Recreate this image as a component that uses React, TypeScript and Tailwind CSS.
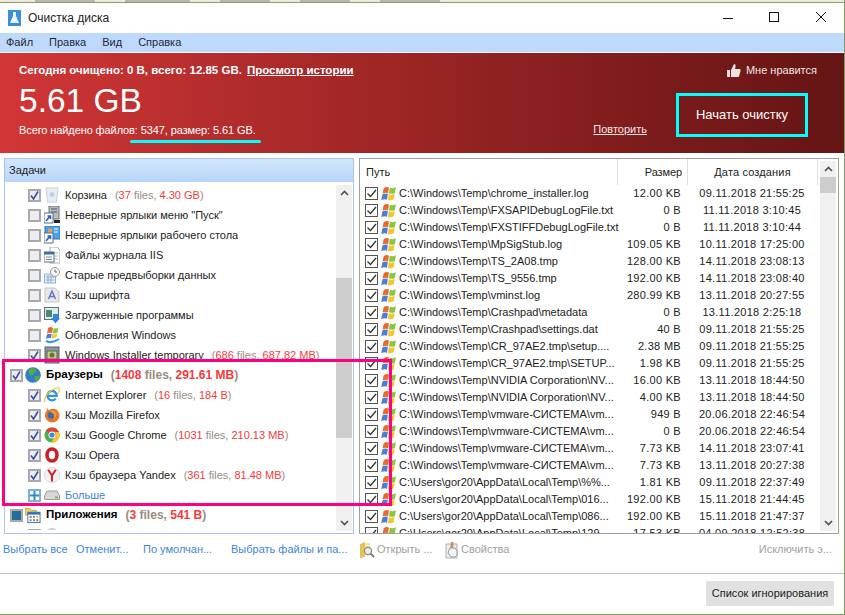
const font = "font-['Liberation_Sans',Arial,sans-serif]";

const WinFlag = () => (
  <svg width="16" height="16" viewBox="1 1 15 14" className="shrink-0">
    <path d="M3.5 2.5 Q6 0.8 8.5 2 L7.6 7.2 Q5 6.2 2.4 7.6Z" fill="#ea6a2c" />
    <path d="M9.3 2.2 Q12 3.2 15 1.6 L14 7 Q11 8.4 8.4 7.4Z" fill="#8cc63f" />
    <path d="M2.3 8.4 Q5 7 7.4 8 L6.6 13.4 Q4 12.4 1.2 13.8Z" fill="#4a7fd8" />
    <path d="M8.3 8.2 Q11 9.2 13.8 7.8 L13 13 Q10 14.4 7.5 13.6Z" fill="#f5c52c" />
  </svg>
);

const Folder = () => (
  <svg width="16" height="18" viewBox="0 0 16 18" className="shrink-0">
    <path d="M1 3 L6 1 L6 16 L1 17Z" fill="#e6c25a" />
    <path d="M6 2 H11 V14 H6Z" fill="#f6e7a6" />
    <circle cx="9" cy="10" r="3.6" fill="#e8eef2" stroke="#8a8a7a" strokeWidth="1.2" />
    <path d="M11.5 12.5 L15 16" stroke="#7a7a6a" strokeWidth="1.8" />
  </svg>
);

const Props = () => (
  <svg width="16" height="18" viewBox="0 0 16 18" className="shrink-0">
    <path d="M2 3 H13 V17 H2Z" fill="#eeeeee" stroke="#b0b0b0" />
    <path d="M7 1 L9.5 1 L9 9 H6Z" fill="#d98a5a" />
    <path d="M5 9 L6 7 H11 L13 10 V14 L11 16 H7 L4 12Z" fill="#f4f4f4" stroke="#9a9a9a" />
  </svg>
);

const TreeIcon = ({ name }: { name: string }) => {
  switch (name) {
    case 'bin':
      return (
        <svg width="16" height="16" viewBox="0 0 16 16">
          <path d="M2 1 H14 L12.5 15 H3.5Z" fill="#e9eef3" stroke="#c9d2da" />
          <circle cx="8" cy="7.5" r="2.5" fill="#b9d4ea" />
        </svg>
      );
    case 'shortcut1':
      return (
        <svg width="16" height="18" viewBox="0 0 16 18">
          <path d="M5 0 H15 V13 H5Z" fill="#b8bcc2" stroke="#6a6f78" />
          <path d="M7 3 H13 M7 6 H13" stroke="#4a4f58" />
          <path d="M10 14 H16 V17 H10Z" fill="#222" />
          <path d="M0 7 H9 V17 H0Z" fill="#fff" stroke="#5a6a80" />
          <path d="M2 15 L6 10 M3.5 10 H6.5 V13" stroke="#1f62c8" strokeWidth="1.6" fill="none" />
        </svg>
      );
    case 'shortcut2':
      return (
        <svg width="16" height="18" viewBox="0 0 16 18">
          <path d="M1 0 H16 V13 H1Z" fill="#4aa3e6" stroke="#2a78bc" />
          <rect x="4" y="3" width="4" height="4" fill="#f0a040" />
          <path d="M10 3 H14 M10 6 H14" stroke="#fff" />
          <path d="M0 7 H9 V17 H0Z" fill="#fff" stroke="#5a6a80" />
          <path d="M2 15 L6 10 M3.5 10 H6.5 V13" stroke="#1f62c8" strokeWidth="1.6" fill="none" />
        </svg>
      );
    case 'log':
      return (
        <svg width="16" height="17" viewBox="0 0 16 17">
          <path d="M6 0 H13 L16 3 V16 H6Z" fill="#fff" stroke="#a8a8a8" />
          <path d="M9 6 H14 M9 9 H14 M9 12 H14" stroke="#b5b5b5" />
          <rect x="0" y="5" width="10" height="10" fill="#fff" stroke="#5f6f8a" />
          <rect x="0" y="5" width="10" height="2.5" fill="#3d6cb0" />
          <path d="M2 10 H8 M2 12.5 H8" stroke="#7b8aa0" />
        </svg>
      );
    case 'prefetch':
      return (
        <svg width="16" height="17" viewBox="0 0 16 17">
          <rect x="0.5" y="7" width="11" height="9" fill="#e2edf7" stroke="#8fb4d4" />
          <path d="M2 10 H10 M2 13 H10 M4 8 V16 M7 8 V16" stroke="#8fb4d4" />
          <circle cx="11" cy="5" r="4.5" fill="#f4f4f4" stroke="#9a9a9a" />
          <path d="M11 2.5 V5 H13" stroke="#666" fill="none" />
        </svg>
      );
    case 'font':
      return (
        <svg width="16" height="16" viewBox="0 0 16 16">
          <path d="M1 1 H11 L15 5 V15 H1Z" fill="#e8e8e8" stroke="#c4c4c4" />
          <path d="M4.5 12 L8 4 L11.5 12 M6 9.5 H10" stroke="#5a7cc0" strokeWidth="1.5" fill="none" />
        </svg>
      );
    case 'download':
      return (
        <svg width="16" height="17" viewBox="0 0 16 17">
          <rect x="0.5" y="0.5" width="14" height="12" fill="#dfe8ee" stroke="#5e7080" />
          <rect x="2" y="3" width="6" height="7" fill="#4d8a6a" />
          <path d="M9 7 H14 V11 H16 L11.5 16.5 L7 11 H9Z" fill="#2f86d8" />
        </svg>
      );
    case 'update':
      return (
        <svg width="16" height="18" viewBox="0 0 16 18">
          <path d="M4 2 Q7 0 9 2 L8 7 Q5 6 3 8Z" fill="#ea6a2c" />
          <path d="M9.7 2 Q12 3 14.5 1.5 L13.5 6.5 Q11 8 8.8 7Z" fill="#8cc63f" />
          <path d="M2.8 8.7 Q5 7 7.8 8 L7 12 Q4 11.5 2 13Z" fill="#4a7fd8" />
          <path d="M8.6 8 Q11 8.8 13.3 7.4 L12.6 11 Q10 12.5 7.8 12Z" fill="#f5c52c" />
          <path d="M2 15 Q8 18 15 13" stroke="#3d9ad8" strokeWidth="2" fill="none" />
        </svg>
      );
    case 'installer':
      return (
        <svg width="16" height="18" viewBox="0 0 16 18">
          <rect x="1" y="1" width="14" height="16" fill="#8f96a0" stroke="#5a5f68" />
          <rect x="3" y="5" width="10" height="8" fill="#d7c684" stroke="#4c6f4c" />
          <circle cx="8" cy="9" r="2.5" fill="#4f7c4f" />
        </svg>
      );
    case 'globe':
      return (
        <svg width="16" height="16" viewBox="0 0 16 16">
          <circle cx="8" cy="8" r="7.8" fill="#2f7fc4" />
          <path d="M4 2.5 Q8 0 11 2 Q12 5 9 6 Q8 9 5.5 8.5 Q3 6 4 2.5Z" fill="#58a845" />
          <path d="M9.5 9.5 Q13 8 15 9.5 Q14 13 11 14.5 Q9 12 9.5 9.5Z" fill="#58a845" />
        </svg>
      );
    case 'ie':
      return (
        <svg width="16" height="16" viewBox="0 0 16 16">
          <path d="M4.2 8.8 H12.8 A4.7 4.7 0 1 0 11.8 11.6" stroke="#2f97de" strokeWidth="2.3" fill="none" />
          <path d="M1 15 Q-0.5 10 6 4.5 Q13 -0.5 15 1 Q16 3 14 6.5" stroke="#f0c030" strokeWidth="1.1" fill="none" />
        </svg>
      );
    case 'firefox':
      return (
        <svg width="16" height="16" viewBox="0 0 16 16">
          <path d="M3 3 Q2 1.5 3 1 Q4 3 5 3 Q9 0.5 13 3 Q16.5 7 15 11 Q12.5 15.5 8 15.5 Q2.5 15 1 9.5 Q0.7 6 3 3Z" fill="#e8762a" />
          <circle cx="7.5" cy="8" r="3.8" fill="#3f6aa8" />
          <path d="M5 4 Q10 2.5 12.5 6 Q13 10 9.5 12 Q11 9 9.5 7 Q7.5 5.500 5 4Z" fill="#f29a2e" />
        </svg>
      );
    case 'chrome':
      return (
        <svg width="16" height="16" viewBox="0 0 16 16">
          <circle cx="8" cy="8" r="7.6" fill="#4caf50" />
          <path d="M8 0.4 A7.6 7.6 0 0 1 14.9 4.9 H8 A3.2 3.2 0 0 0 4.9 7 L2 3 A7.6 7.6 0 0 1 8 0.4Z" fill="#e04534" />
          <path d="M14.9 4.9 A7.6 7.6 0 0 1 7.2 15.6 L10.6 10 A3.2 3.2 0 0 0 11 5Z" fill="#f8c42d" />
          <circle cx="8" cy="8" r="3.5" fill="#fff" />
          <circle cx="8" cy="8" r="2.6" fill="#3d86e0" />
        </svg>
      );
    case 'opera':
      return (
        <svg width="16" height="16" viewBox="0 0 16 16">
          <ellipse cx="8" cy="8" rx="5" ry="6" fill="none" stroke="#cc1f26" strokeWidth="3.6" />
        </svg>
      );
    case 'yandex':
      return (
        <svg width="16" height="16" viewBox="0 0 16 16">
          <circle cx="8" cy="8" r="7.6" fill="#f2f2f2" stroke="#d8d8d8" />
          <path d="M4.2 2.8 L8 8.6 L11.8 2.8 M8 8.6 V14.4" stroke="#d8222a" strokeWidth="2" fill="none" />
        </svg>
      );
    case 'drive':
      return (
        <svg width="16" height="16" viewBox="0 0 16 16">
          <path d="M3 4 H13 L15.5 9 V12.5 H0.5 V9Z" fill="#d8d8d8" stroke="#9c9c9c" />
          <rect x="11" y="9.6" width="3" height="1.6" fill="#68b04a" />
        </svg>
      );
    case 'apps':
      return (
        <svg width="17" height="17" viewBox="0 0 17 17">
          <path d="M0 1 H5 L7 3 H12 V8 H0Z" fill="#f2cd68" stroke="#c9a23e" />
          <rect x="3" y="5" width="13" height="11" fill="#fff" stroke="#3d74b8" />
          <rect x="3" y="5" width="13" height="2.5" fill="#2e6cba" />
          <rect x="5" y="9" width="2" height="2" fill="#d8502f" />
          <rect x="8.5" y="9" width="2" height="2" fill="#58a845" />
          <rect x="12" y="9" width="2" height="2" fill="#f0b030" />
          <rect x="5" y="12.5" width="2" height="2" fill="#3d86e0" />
          <rect x="8.5" y="12.5" width="2" height="2" fill="#3d86e0" />
          <rect x="12" y="12.5" width="2" height="2" fill="#d8502f" />
        </svg>
      );
    default:
      return (
        <svg width="16" height="16" viewBox="0 0 16 16">
          <circle cx="8" cy="8" r="7" fill="#c8d0dc" />
        </svg>
      );
  }
};

const TreeCheck = ({ state }: { state: 'on' | 'off' | 'mixed' | 'plus' }) => {
  if (state === 'plus') {
    return (
      <div className="w-[13px] h-[13px] shrink-0 border-2 border-[#7fb0dc] bg-white flex items-center justify-center text-[#2f86c8]">
        <svg width="9" height="9" viewBox="0 0 9 9">
          <path d="M4.5 0 V9 M0 4.5 H9" stroke="currentColor" strokeWidth="2" />
        </svg>
      </div>
    );
  }
  return (
    <div className="w-[13px] h-[13px] shrink-0 border-2 border-[#a9a9a9] bg-[#ececf2] flex items-center justify-center">
      {state === 'on' && (
        <svg width="9" height="9" viewBox="0 0 9 9">
          <path d="M1 4.5 L3.5 8 L8 0.5" stroke="#3f4fa0" strokeWidth="1.6" fill="none" />
        </svg>
      )}
      {state === 'mixed' && <div className="w-[9px] h-[9px] bg-[#1f6f9c]" />}
    </div>
  );
};

const Stat = ({ files, size, bold }: { files: string; size: string; bold?: boolean }) => (
  <span className={`ml-[8px] text-[#9a8a80] ${bold ? 'font-bold text-[12px]' : ''}`}>
    (<span className="text-[#f53a3a]">{files}</span> files, <span className="text-[#f53a3a]">{size}</span>)
  </span>
);

const tasks = [
  { icon: 'bin', state: 'on', label: 'Корзина', files: '37', size: '4.30 GB' },
  { icon: 'shortcut1', state: 'off', label: 'Неверные ярлыки меню "Пуск"' },
  { icon: 'shortcut2', state: 'off', label: 'Неверные ярлыки рабочего стола' },
  { icon: 'log', state: 'off', label: 'Файлы журнала IIS' },
  { icon: 'prefetch', state: 'off', label: 'Старые предвыборки данных' },
  { icon: 'font', state: 'off', label: 'Кэш шрифта' },
  { icon: 'download', state: 'off', label: 'Загруженные программы' },
  { icon: 'update', state: 'off', label: 'Обновления Windows' },
  { icon: 'installer', state: 'on', label: 'Windows Installer temporary', files: '686', size: '687.82 MB' },
  { icon: 'globe', state: 'on', label: 'Браузеры', files: '1408', size: '291.61 MB', top: true },
  { icon: 'ie', state: 'on', label: 'Internet Explorer', files: '16', size: '184 B' },
  { icon: 'firefox', state: 'on', label: 'Кэш Mozilla Firefox' },
  { icon: 'chrome', state: 'on', label: 'Кэш Google Chrome', files: '1031', size: '210.13 MB' },
  { icon: 'opera', state: 'on', label: 'Кэш Opera' },
  { icon: 'yandex', state: 'on', label: 'Кэш браузера Yandex', files: '361', size: '81.48 MB' },
  { icon: 'drive', state: 'plus', label: 'Больше', link: true },
  { icon: 'apps', state: 'mixed', label: 'Приложения', files: '3', size: '541 B', top: true },
  { icon: 'other', state: 'off', label: '' },
] as const;

const files = [
  ['C:\\Windows\\Temp\\chrome_installer.log', '12.00 KB', '09.11.2018 21:55:25'],
  ['C:\\Windows\\Temp\\FXSAPIDebugLogFile.txt', '0 B', '11.11.2018 3:10:45'],
  ['C:\\Windows\\Temp\\FXSTIFFDebugLogFile.txt', '0 B', '11.11.2018 3:10:44'],
  ['C:\\Windows\\Temp\\MpSigStub.log', '109.05 KB', '10.11.2018 17:25:00'],
  ['C:\\Windows\\Temp\\TS_2A08.tmp', '128.00 KB', '14.11.2018 23:08:13'],
  ['C:\\Windows\\Temp\\TS_9556.tmp', '192.00 KB', '14.11.2018 23:08:40'],
  ['C:\\Windows\\Temp\\vminst.log', '280.99 KB', '13.11.2018 20:27:55'],
  ['C:\\Windows\\Temp\\Crashpad\\metadata', '0 B', '13.11.2018 2:25:18'],
  ['C:\\Windows\\Temp\\Crashpad\\settings.dat', '40 B', '09.11.2018 21:55:25'],
  ['C:\\Windows\\Temp\\CR_97AE2.tmp\\setup....', '2.38 MB', '09.11.2018 21:55:25'],
  ['C:\\Windows\\Temp\\CR_97AE2.tmp\\SETUP...', '1.98 KB', '09.11.2018 21:55:25'],
  ['C:\\Windows\\Temp\\NVIDIA Corporation\\NV...', '16.00 KB', '13.11.2018 18:44:50'],
  ['C:\\Windows\\Temp\\NVIDIA Corporation\\NV...', '4.00 KB', '13.11.2018 18:44:50'],
  ['C:\\Windows\\Temp\\vmware-СИСТЕМА\\vm...', '949 B', '20.06.2018 22:46:54'],
  ['C:\\Windows\\Temp\\vmware-СИСТЕМА\\vm...', '0 B', '20.06.2018 22:46:54'],
  ['C:\\Windows\\Temp\\vmware-СИСТЕМА\\vm...', '7.73 KB', '14.11.2018 23:07:41'],
  ['C:\\Windows\\Temp\\vmware-СИСТЕМА\\vm...', '7.73 KB', '13.11.2018 20:27:38'],
  ['C:\\Users\\gor20\\AppData\\Local\\Temp\\%%...', '1.81 KB', '09.11.2018 22:37:49'],
  ['C:\\Users\\gor20\\AppData\\Local\\Temp\\016...', '192.00 KB', '15.11.2018 21:44:45'],
  ['C:\\Users\\gor20\\AppData\\Local\\Temp\\086...', '192.00 KB', '15.11.2018 21:47:37'],
  ['C:\\Users\\gor20\\AppData\\Local\\Temp\\129...', '17.53 KB', '04.09.2018 12:52:38'],
];

const Scrollbar = ({ before, thumb, className }: { before: string; thumb: string; className: string }) => (
  <div className={`w-[16px] shrink-0 bg-[#f0f0f0] flex flex-col text-[#505050] ${className}`}>
    <div className="h-[16px] shrink-0 flex items-center justify-center">
      <svg width="9" height="6" viewBox="0 0 9 6">
        <path d="M1 5 L4.5 1.5 L8 5" stroke="currentColor" strokeWidth="1.6" fill="none" />
      </svg>
    </div>
    <div className={`${before} shrink-0`} />
    <div className={`${thumb} shrink-0 bg-[#cdcdcd]`} />
    <div className="flex-1" />
    <div className="h-[16px] shrink-0 flex items-center justify-center">
      <svg width="9" height="6" viewBox="0 0 9 6">
        <path d="M1 1 L4.5 4.5 L8 1" stroke="currentColor" strokeWidth="1.6" fill="none" />
      </svg>
    </div>
  </div>
);

export default function App() {
  return (
    <div className={`${font} relative w-[845px] h-[615px] overflow-hidden bg-white text-[11px] text-[#222] flex flex-col border-r border-b border-[#7f9a5f]`}>
      {/* desktop behind the window */}
      <div className="h-[3px] shrink-0 bg-[#ecebd8] border-b border-[#8ba070] flex gap-[30px] pl-[35px]">
        <div className="w-[60px] h-[2px] bg-[#b9b9ac]" />
        <div className="w-[65px] h-[2px] bg-[#b9b9ac]" />
        <div className="w-[50px] h-[2px] bg-[#b9b9ac]" />
        <div className="w-[50px] h-[2px] bg-[#b9b9ac]" />
        <div className="w-[60px] h-[2px] bg-[#b9b9ac]" />
      </div>

      {/* title bar */}
      <div className="h-[30px] shrink-0 flex items-center pl-[8px]">
        <svg width="13" height="16" viewBox="0 0 13 16" className="shrink-0">
          <rect width="13" height="16" fill="#3a8fdc" />
          <path d="M5 2 H8 V6 L11 13 H2 L5 6Z" fill="#eaf4fc" />
        </svg>
        <span className="ml-[7px] text-[12px] text-[#222]">Очистка диска</span>
        <div className="ml-auto flex items-center">
          <div className="w-[46px] h-[30px] flex items-center justify-center">
            <div className="w-[10px] h-px bg-[#111] mr-[2px]" />
          </div>
          <svg width="46" height="30" viewBox="0 0 46 30"><rect x="17.500" y="9.500" width="9" height="9" fill="none" stroke="#111" /></svg>
          <svg width="46" height="30" viewBox="0 0 46 30"><path d="M18 9 L28 19 M28 9 L18 19" stroke="#111" /></svg>
        </div>
      </div>

      {/* menu */}
      <div className="h-[19px] shrink-0 bg-[#bfd9fc] flex items-center gap-[16px] pl-[6px] text-[#1e2a3a]">
        <span>Файл</span>
        <span>Правка</span>
        <span>Вид</span>
        <span>Справка</span>
      </div>

      {/* red banner */}
      <div className="h-[100px] shrink-0 mt-px bg-gradient-to-r from-[#d23636] to-[#651414] flex text-white">
        <div className="pl-[19px] pt-[10px] flex flex-col">
          <div className="font-bold text-[11.500px] leading-[14px]">
            Сегодня очищено: 0 В, всего: 12.85 GB.
            <span className="ml-[5px] underline">Просмотр истории</span>
          </div>
          <div className="text-[33.500px] leading-[40px] mt-[4px]">5.61 GB</div>
          <div className="leading-[14px] mt-[2px] tracking-[-0.1px]">Всего найдено файлов: 5347, размер: 5.61 GB.</div>
        </div>
        <div className="ml-auto flex flex-col items-end pr-[27px] pt-[10px]">
          <div className="flex items-center gap-[5px] leading-[14px] text-[#f0e4e4]">
            <svg width="14" height="13" viewBox="0 0 14 13">
              <path d="M0 6 H3 V13 H0Z M4 6 L7 0 Q9 0 8.500 3 L8 5 H13 Q14 6 13.500 7 L12 12.500 Q11.500 13 10 13 H4Z" fill="#efe0e0" />
            </svg>
            Мне нравится
          </div>
          <div className="flex items-end mt-[16px] pr-[9px]">
            <span className="underline text-[#f4e6e6] mr-[29px]">Повторить</span>
            <button className="w-[132px] h-[44px] border-[3px] border-[#00ffff] text-[13px] text-white flex items-center justify-center">
              Начать очистку
            </button>
          </div>
        </div>
      </div>

      {/* panels */}
      <div className="h-[376px] shrink-0 mt-[5px] ml-[4px] flex gap-[5px]">
        <div className="w-[350px] border border-[#a9c6ea] flex flex-col">
          <div className="h-[23px] shrink-0 bg-gradient-to-b from-[#d4e6fc] to-[#b7d5fb] flex items-center pl-[4px] text-[#222]">Задачи</div>
          <div className="flex-1 min-h-0 flex pr-px">
            <div className="flex-1 overflow-hidden mt-[3px] mb-[3px]">
              {tasks.map((t, i) => {
                const isTop = 'top' in t;
                return (
                  <div key={i} className={`h-[20px] flex items-center ${isTop ? 'pl-[5px]' : 'pl-[23px]'}`}>
                    <TreeCheck state={t.state} />
                    <div className={`w-[16px] h-[18px] shrink-0 flex items-center justify-center ${isTop ? 'ml-[2px]' : 'ml-[3px]'}`}>
                      <TreeIcon name={t.icon} />
                    </div>
                    <span className={`ml-[5px] whitespace-nowrap ${isTop ? 'font-bold text-[11.500px] text-black' : ''} ${'link' in t ? 'text-[#3d85c8]' : ''}`}>{t.label}</span>
                    {'files' in t && <Stat files={t.files} size={t.size} bold={isTop} />}
                  </div>
                );
              })}
            </div>
            <Scrollbar className="mt-[3px] mb-[2px]" before="h-[77px]" thumb="h-[160px]" />
          </div>
        </div>

        <div className="w-[480px] border border-[#a0a0a0] flex pr-[2px]">
          <div className="flex-1 min-w-0 flex flex-col">
            <div className="h-[26px] shrink-0 flex items-center">
              <div className="w-[258px] h-full flex items-center pl-[6px] border-r border-[#e0e0e0]">Путь</div>
              <div className="w-[70px] h-full flex items-center justify-end pr-[5px] border-r border-[#e0e0e0] tracking-[-0.1px]">Размер</div>
              <div className="w-[130px] h-full flex items-center justify-center border-r border-[#e0e0e0] tracking-[0.15px]">Дата создания</div>
            </div>
            <div className="flex-1 min-h-0 overflow-hidden">
              {files.map((f, i) => (
                <div key={i} className="h-[17px] flex items-center">
                  <div className="w-[258px] pl-[5px] flex items-center shrink-0">
                    <div className="w-[13px] h-[13px] shrink-0 border border-[#555] bg-white flex items-center justify-center">
                      <svg width="11" height="11" viewBox="0 0 11 11">
                        <path d="M1.500 5.500 L4.500 8.500 L10 2" stroke="#333" strokeWidth="1.300" fill="none" />
                      </svg>
                    </div>
                    <div className="ml-[3px]"><WinFlag /></div>
                    <span className="ml-[2px] whitespace-nowrap">{f[0]}</span>
                  </div>
                  <div className="w-[70px] text-right pr-[7px] shrink-0 tracking-[0.3px]">{f[1]}</div>
                  <div className="w-[130px] text-center shrink-0 whitespace-nowrap tracking-[0.28px] pr-[2px]">{f[2]}</div>
                </div>
              ))}
            </div>
          </div>
          <Scrollbar className="my-[2px]" before="h-0" thumb="h-[16px]" />
        </div>
      </div>

      {/* links under panels */}
      <div className="h-[31px] shrink-0 flex items-center text-[#3d85d8] whitespace-nowrap">
        <span className="ml-[3px] w-[73px]">Выбрать все</span>
        <span className="w-[67px]">Отменит...</span>
        <span className="w-[88px]">По умолчан...</span>
        <span>Выбрать файлы и па...</span>
        <div className="ml-auto w-[485px] flex items-center text-[#a0a0a0] pr-[12px]">
          <Folder />
          <span className="ml-[2px] w-[60px]">Открыть ...</span>
          <div className="ml-[7px]"><Props /></div>
          <span className="ml-px">Свойства</span>
          <span className="ml-auto">Исключить э...</span>
        </div>
      </div>

      {/* footer */}
      <div className="flex-1 mt-[8px] border-t border-[#c4c4c4] flex items-start justify-end pr-[10px] pt-[7px]">
        <button className="w-[128px] h-[25px] bg-[#e1e1e1] text-[#222] flex items-center justify-center">Список игнорирования</button>
      </div>

      {/* annotations drawn on top of the screenshot */}
      <div className="absolute left-[130px] top-[140px] w-[131px] h-[3px] rounded-full bg-[#00ffff]" />
      <div className="absolute left-[2px] top-[359px] w-[390px] h-[147px] border-[3px] border-[#ff0080]" />
    </div>
  );
}
